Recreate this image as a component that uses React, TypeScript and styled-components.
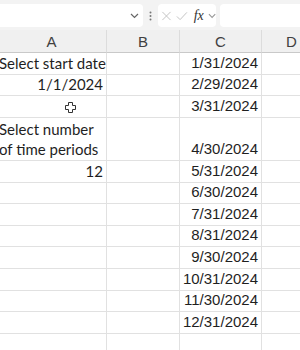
import React from 'react';
import styled, { createGlobalStyle } from 'styled-components';

const GlobalStyle = createGlobalStyle`
  html, body {
    margin: 0;
    padding: 0;
    background: #ffffff;
    overflow: hidden;
  }
  body {
    font-family: 'Liberation Sans', Arial, sans-serif;
  }
`;

const Sheet = styled.div`
  width: 300px;
  height: 350px;
  overflow: hidden;
  background: #ffffff;
`;

const Toolbar = styled.div`
  height: 30px;
  box-sizing: border-box;
  padding: 4px 0 3px;
  display: flex;
  align-items: stretch;
  background: #f3f3f3;
`;

const NameBox = styled.div`
  width: 146px;
  margin-left: -3px;
  background: #ffffff;
  border-radius: 0 4px 4px 0;
  display: flex;
  align-items: center;
  justify-content: flex-end;
  padding-right: 4px;
  box-sizing: border-box;
`;

const Grip = styled.div`
  width: 15px;
  display: flex;
  align-items: center;
  justify-content: center;
`;

const ActionBox = styled.div`
  width: 58px;
  background: #ffffff;
  border-radius: 4px;
  display: flex;
  align-items: center;
  gap: 4px;
  padding-left: 3px;
  box-sizing: border-box;
`;

const Fx = styled.span`
  font-family: 'Liberation Serif', 'Times New Roman', serif;
  font-style: italic;
  font-size: 14px;
  color: #333333;
  margin-left: 2px;
`;

const FormulaInput = styled.div`
  flex: 1;
  margin-left: 4px;
  background: #ffffff;
  border-radius: 4px 0 0 4px;
`;

const Grid = styled.div`
  display: grid;
  grid-template-columns: 110px 73px 82px 60px;
  margin-left: -3px;
`;

const HeaderCell = styled.div`
  height: 23px;
  box-sizing: border-box;
  background: #f0f0f0;
  border-right: 1px solid #dcdcdc;
  border-bottom: 1px solid #c9c9c9;
  display: flex;
  align-items: center;
  justify-content: center;
  font-family: 'Liberation Sans', Arial, sans-serif;
  font-size: 15px;
  color: #404040;
`;

const Cell = styled.div<{ $align?: 'left' | 'right'; $tall?: boolean; $aptos?: boolean }>`
  height: ${(p) => (p.$tall ? '43.2px' : '21.6px')};
  box-sizing: border-box;
  border-right: 1px solid #e1e1e1;
  border-bottom: 1px solid #e1e1e1;
  display: flex;
  flex-direction: column;
  justify-content: flex-end;
  align-items: ${(p) => (p.$align === 'right' ? 'flex-end' : 'flex-start')};
  padding: 0 3px 1px 2px;
  font-family: ${(p) => (p.$aptos ? "'Lato', 'Liberation Sans', sans-serif" : "'Liberation Sans', Arial, sans-serif")};
  font-size: 15px;
  line-height: 20px;
  color: #1f1f1f;
  white-space: nowrap;
  overflow: hidden;
  position: relative;
`;

const Cursor = styled.svg`
  position: absolute;
  left: 68px;
  top: 6px;
`;

const Chevron = ({ color = '#555' }: { color?: string }) => (
  <svg width="9" height="6" viewBox="0 0 9 6">
    <path d="M1 1l3.5 3.5L8 1" fill="none" stroke={color} strokeWidth="1.2" />
  </svg>
);

type Row = { a?: string; aAlign?: 'left' | 'right'; c?: string; tall?: boolean; cursor?: boolean; wrap?: string[] };

const rows: Row[] = [
  { a: 'Select start date', aAlign: 'left', c: '1/31/2024' },
  { a: '1/1/2024', aAlign: 'right', c: '2/29/2024' },
  { c: '3/31/2024', cursor: true },
  { wrap: ['Select number', 'of time periods'], c: '4/30/2024', tall: true },
  { a: '12', aAlign: 'right', c: '5/31/2024' },
  { c: '6/30/2024' },
  { c: '7/31/2024' },
  { c: '8/31/2024' },
  { c: '9/30/2024' },
  { c: '10/31/2024' },
  { c: '11/30/2024' },
  { c: '12/31/2024' },
  {},
];

export default function App() {
  return (
    <Sheet>
      <GlobalStyle />
      <Toolbar>
        <NameBox>
          <Chevron color="#666" />
        </NameBox>
        <Grip>
          <svg width="3" height="10" viewBox="0 0 3 10">
            <circle cx="1.5" cy="1.5" r="1" fill="#777" />
            <circle cx="1.5" cy="5" r="1" fill="#777" />
            <circle cx="1.5" cy="8.5" r="1" fill="#777" />
          </svg>
        </Grip>
        <ActionBox>
          <svg width="12" height="12" viewBox="0 0 12 12">
            <path d="M1.5 1.5l9 9M10.5 1.5l-9 9" stroke="#c4c4c4" strokeWidth="1.1" />
          </svg>
          <svg width="13" height="12" viewBox="0 0 13 12">
            <path d="M1 6.5l3.5 3.5L12 2" fill="none" stroke="#c4c4c4" strokeWidth="1.1" />
          </svg>
          <Fx>fx</Fx>
          <Chevron color="#999" />
        </ActionBox>
        <FormulaInput />
      </Toolbar>
      <Grid>
        {['A', 'B', 'C', 'D'].map((h) => (
          <HeaderCell key={h}>{h}</HeaderCell>
        ))}
        {rows.map((r, i) => (
          <React.Fragment key={i}>
            <Cell $align={r.aAlign} $tall={r.tall} $aptos>
              {r.wrap ? r.wrap.map((w) => <span key={w}>{w}</span>) : r.a}
              {r.cursor && (
                <Cursor width="11" height="11" viewBox="0 0 11 11">
                  <path
                    d="M3.5 0.5h4v3h3v4h-3v3h-4v-3h-3v-4h3z"
                    fill="#ffffff"
                    stroke="#333"
                    strokeWidth="1"
                  />
                </Cursor>
              )}
            </Cell>
            <Cell $tall={r.tall} />
            <Cell $align="right" $tall={r.tall}>
              {r.c}
            </Cell>
            <Cell $tall={r.tall} />
          </React.Fragment>
        ))}
      </Grid>
    </Sheet>
  );
}
